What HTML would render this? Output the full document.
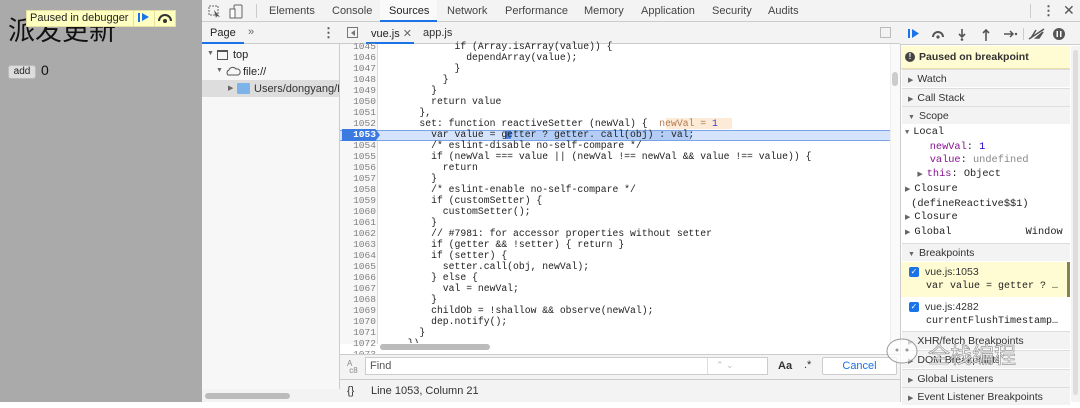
<!DOCTYPE html>
<html><head><meta charset="utf-8"><style>
*{margin:0;padding:0;box-sizing:border-box}
body{width:1080px;height:402px;overflow:hidden;position:relative;font-family:"Liberation Sans",sans-serif;font-size:11px;color:#333;background:#fff}
.a{position:absolute}
.mono{font-family:"Liberation Mono",monospace}
.code div{height:11px;line-height:11px;white-space:pre;font-size:9.75px}
.ln div{height:11px;line-height:11px;font-size:9.55px;text-align:right;color:#808080}
.sec{position:absolute;left:902px;width:168px;height:18px;line-height:18px;background:#f3f3f3;border-top:1px solid #ddd;color:#333;font-size:10.5px;padding-left:6px}
.tri{font-size:7px;color:#666;margin-right:4px}
</style></head><body>
<!-- page area -->
<div class="a" style="left:0;top:0;width:202px;height:402px;background:#aaa"></div>
<div class="a" style="left:8px;top:14px;font-size:27px;color:#111;font-family:'Liberation Sans','Noto Sans CJK SC',sans-serif;line-height:34px">派发更新</div>
<div class="a" style="left:26px;top:10px;width:150px;height:17px;background:#ffffc0;border:1px solid #e8e0a0"></div>
<div class="a" style="left:30px;top:12px;font-size:11px;color:#222">Paused in debugger</div>
<div class="a" style="left:133px;top:10px;width:1px;height:17px;background:#e8e0a0"></div>
<div class="a" style="left:154px;top:10px;width:1px;height:17px;background:#e8e0a0"></div>
<div class="a" style="left:138px;top:13px;width:2px;height:9px;background:#1a73e8"></div>
<div class="a" style="left:142px;top:13px;width:0;height:0;border-left:7px solid #1a73e8;border-top:4.5px solid transparent;border-bottom:4.5px solid transparent"></div>
<svg class="a" style="left:157px;top:12px" width="16" height="12"><path d="M2 9 A6 6 0 0 1 14 9" stroke="#333" stroke-width="2" fill="none"/><circle cx="8" cy="9" r="2" fill="#333"/></svg>
<div class="a" style="left:8px;top:65px;width:28px;height:14px;background:#ddd;border:1px solid #bbb;border-radius:3px;font-size:10px;text-align:center;line-height:12px;color:#222">add</div>
<div class="a" style="left:41px;top:62px;font-size:14px;color:#111">0</div>
<!-- top toolbar -->
<div class="a" style="left:202px;top:0;width:878px;height:22px;background:#f3f3f3;border-bottom:1px solid #ccc"></div>
<svg class="a" style="left:208px;top:4px" width="40" height="15"><rect x="1" y="2" width="9" height="9" fill="none" stroke="#666" stroke-dasharray="2 1"/><path d="M6 6 L12 13 L9 12 L8 14" fill="#555"/><rect x="26" y="1" width="8" height="13" rx="1" fill="none" stroke="#666"/><rect x="22" y="5" width="5" height="9" fill="#fff" stroke="#666"/></svg>
<div class="a" style="left:256px;top:4px;width:1px;height:14px;background:#ccc"></div>
<div class="a" style="top:5px;left:269px;color:#444">Elements</div>
<div class="a" style="top:5px;left:332px;color:#444">Console</div>
<div class="a" style="top:0;left:380px;width:57px;height:22px;background:#fafafa;border-bottom:2px solid #1a73e8"></div>
<div class="a" style="top:5px;left:389px;color:#222">Sources</div>
<div class="a" style="top:5px;left:447px;color:#444">Network</div>
<div class="a" style="top:5px;left:505px;color:#444">Performance</div>
<div class="a" style="top:5px;left:584px;color:#444">Memory</div>
<div class="a" style="top:5px;left:641px;color:#444">Application</div>
<div class="a" style="top:5px;left:712px;color:#444">Security</div>
<div class="a" style="top:5px;left:768px;color:#444">Audits</div>
<div class="a" style="left:1030px;top:4px;width:1px;height:14px;background:#ccc"></div>
<div class="a" style="left:1042px;top:3px;font-size:13px;color:#555;font-weight:bold">⋮</div>
<div class="a" style="left:1063px;top:2px;font-size:14px;color:#555">✕</div>
<!-- navigator -->
<div class="a" style="left:202px;top:22px;width:138px;height:380px;background:#f7f7f7;border-right:1px solid #ccc"></div>
<div class="a" style="left:202px;top:22px;width:138px;height:22px;background:#f3f3f3;border-bottom:1px solid #ccc"></div>
<div class="a" style="left:202px;top:42px;width:42px;height:2px;background:#1a73e8"></div>
<div class="a" style="left:210px;top:27px;color:#222">Page</div>
<div class="a" style="left:248px;top:26px;color:#666">»</div>
<div class="a" style="left:322px;top:25px;color:#555;font-weight:bold;font-size:13px">⋮</div>
<div class="a" style="left:207px;top:50px;font-size:7px;color:#666">▼</div>
<div class="a" style="left:217px;top:50px;width:11px;height:10px;border:1px solid #555;border-top-width:2px"></div>
<div class="a" style="left:233px;top:49px;color:#222">top</div>
<div class="a" style="left:216px;top:67px;font-size:7px;color:#666">▼</div>
<svg class="a" style="left:225px;top:65px" width="16" height="12"><path d="M3 10 A3 3 0 0 1 4 5 A4 4 0 0 1 11 4 A3 3 0 0 1 13 10 Z" fill="none" stroke="#555"/></svg>
<div class="a" style="left:243px;top:66px;color:#222">file://</div>
<div class="a" style="left:202px;top:80px;width:137px;height:17px;background:#ddd"></div>
<div class="a" style="left:228px;top:84px;font-size:7px;color:#666">▶</div>
<div class="a" style="left:237px;top:83px;width:13px;height:11px;background:#7cb3e8;border-radius:1px"></div>
<div class="a" style="left:254px;top:83px;color:#333;white-space:nowrap;width:85px;overflow:hidden">Users/dongyang/D</div>
<div class="a" style="left:202px;top:389px;width:138px;height:13px;background:#f3f3f3"></div>
<div class="a" style="left:205px;top:393px;width:85px;height:6px;background:#bbb;border-radius:3px"></div>
<!-- editor tabs -->
<div class="a" style="left:340px;top:22px;width:560px;height:22px;background:#f3f3f3;border-bottom:1px solid #ccc"></div>
<div class="a" style="left:347px;top:27px;width:11px;height:11px;border:1px solid #777"><div style="position:absolute;left:3px;top:2px;border-right:4px solid #777;border-top:3px solid transparent;border-bottom:3px solid transparent"></div></div>
<div class="a" style="left:371px;top:27px;color:#222">vue.js <span style="color:#666">✕</span></div>
<div class="a" style="left:366px;top:42px;width:48px;height:2px;background:#1a73e8"></div>
<div class="a" style="left:423px;top:27px;color:#333">app.js</div>
<div class="a" style="left:880px;top:27px;width:11px;height:11px;border:1px solid #bbb"></div>
<!-- code -->
<div class="a" style="left:340px;top:44px;width:38px;height:300px;background:#f7f7f7;border-right:1px solid #ddd"></div>
<div class="a" style="left:340px;top:130px;width:550px;height:11px;background:#d6e4fb;border-top:1px solid #7aa3e6;border-bottom:1px solid #7aa3e6"></div>
<div class="a" style="left:342px;top:129px;width:38px;height:12px;background:#3b7ae0;clip-path:polygon(0 0,88% 0,100% 50%,88% 100%,0 100%)"></div>
<div class="a" style="left:505px;top:131px;width:6px;height:8px;background:#4a86e8"></div>
<div class="a" style="left:511px;top:131px;width:180px;height:9px;background:#b3cdf6"></div>
<div class="a" style="left:666px;top:118px;width:66px;height:11px;background:#fdebd8"></div>
<div class="a ln mono" style="left:340px;top:41px;width:36px">
<div>1045</div><div>1046</div><div>1047</div><div>1048</div><div>1049</div><div>1050</div><div>1051</div><div>1052</div><div style="color:#fff;font-weight:bold">1053</div><div>1054</div><div>1055</div><div>1056</div><div>1057</div><div>1058</div><div>1059</div><div>1060</div><div>1061</div><div>1062</div><div>1063</div><div>1064</div><div>1065</div><div>1066</div><div>1067</div><div>1068</div><div>1069</div><div>1070</div><div>1071</div><div>1072</div><div>1073</div></div>
<div class="a code mono" style="left:396px;top:41px;color:#222">
<div>          if (Array.isArray(value)) {</div>
<div>            dependArray(value);</div>
<div>          }</div>
<div>        }</div>
<div>      }</div>
<div>      return value</div>
<div>    },</div>
<div>    set: function reactiveSetter (newVal) {  <span style="color:#b07a50">newVal = <span style="color:#3b3be0">1</span></span></div>
<div>      var value = getter ? getter. call(obj) : val;</div>
<div>      /* eslint-disable no-self-compare */</div>
<div>      if (newVal === value || (newVal !== newVal &amp;&amp; value !== value)) {</div>
<div>        return</div>
<div>      }</div>
<div>      /* eslint-enable no-self-compare */</div>
<div>      if (customSetter) {</div>
<div>        customSetter();</div>
<div>      }</div>
<div>      // #7981: for accessor properties without setter</div>
<div>      if (getter &amp;&amp; !setter) { return }</div>
<div>      if (setter) {</div>
<div>        setter.call(obj, newVal);</div>
<div>      } else {</div>
<div>        val = newVal;</div>
<div>      }</div>
<div>      childOb = !shallow &amp;&amp; observe(newVal);</div>
<div>      dep.notify();</div>
<div>    }</div>
<div>  })</div>
</div>
<div class="a" style="left:379px;top:343px;width:511px;height:9px;background:#fff"></div>
<div class="a" style="left:380px;top:344px;width:110px;height:6px;background:#bbb;border-radius:3px"></div>
<div class="a" style="left:890px;top:44px;width:10px;height:310px;background:#fafafa;border-left:1px solid #eee"></div>
<div class="a" style="left:892px;top:72px;width:6px;height:14px;background:#ccc;border-radius:3px"></div>
<!-- find bar -->
<div class="a" style="left:340px;top:354px;width:560px;height:48px;background:#f3f3f3;border-top:1px solid #ccc"></div>
<div class="a" style="left:347px;top:360px;font-size:8px;color:#888;line-height:7px">A<br>&nbsp;c8</div>
<div class="a" style="left:365px;top:357px;width:403px;height:18px;background:#fff;border:1px solid #ccc"></div>
<div class="a" style="left:370px;top:360px;color:#555">Find</div>
<div class="a" style="left:707px;top:358px;width:1px;height:16px;background:#ddd"></div>
<div class="a" style="left:716px;top:360px;color:#bbb;font-size:9px">⌃ ⌄</div>
<div class="a" style="left:778px;top:360px;color:#333;font-weight:bold">Aa</div>
<div class="a" style="left:804px;top:359px;color:#333">.*</div>
<div class="a" style="left:822px;top:357px;width:75px;height:18px;background:#fff;border:1px solid #ccc;border-radius:2px;text-align:center;line-height:16px;color:#1a73e8">Cancel</div>
<div class="a" style="left:340px;top:379px;width:560px;height:1px;background:#ccc"></div>
<div class="a" style="left:347px;top:385px;color:#333">{}</div>
<div class="a" style="left:371px;top:385px;color:#333">Line 1053, Column 21</div>
<!-- right panel -->
<div class="a" style="left:900px;top:22px;width:180px;height:380px;background:#fff;border-left:1px solid #ccc"></div>
<div class="a" style="left:900px;top:22px;width:180px;height:23px;background:#f3f3f3;border-bottom:1px solid #ccc"></div>
<svg class="a" style="left:905px;top:26px" width="175" height="16">
<rect x="3" y="3" width="2" height="9" fill="#1a73e8"/><path d="M7 3 L14 7.5 L7 12Z" fill="#1a73e8"/>
<path d="M28 11 A5 5 0 0 1 38 11" stroke="#555" stroke-width="2" fill="none"/><circle cx="33" cy="11" r="1.6" fill="#555"/>
<path d="M57 3 V11 M54 8 L57 11 L60 8" stroke="#555" stroke-width="1.6" fill="none"/><circle cx="57" cy="13.5" r="1.3" fill="#555"/>
<path d="M81 13 V4 M78 7 L81 4 L84 7" stroke="#555" stroke-width="1.6" fill="none"/><circle cx="81" cy="14" r="1" fill="#555"/>
<path d="M99 8 H108 M105 5 L108 8 L105 11" stroke="#555" stroke-width="1.5" fill="none"/><circle cx="111" cy="8" r="1.2" fill="#555"/>
<rect x="118" y="2" width="1" height="12" fill="#ccc"/>
<path d="M126 12 L131 4 M131 12 L138 6 L134 12Z M124 13 L139 3" stroke="#555" stroke-width="1.5" fill="#555"/>
<circle cx="154" cy="8" r="6" fill="#555"/><rect x="151.5" y="5" width="1.5" height="6" fill="#fff"/><rect x="155" y="5" width="1.5" height="6" fill="#fff"/>
</svg>
<div class="a" style="left:901px;top:46px;width:169px;height:23px;background:#fffbd2;border-bottom:1px solid #e8e0a8"></div>
<div class="a" style="left:905px;top:52px;width:10px;height:10px;border-radius:50%;background:#444;color:#fff;font-size:8px;text-align:center;line-height:10px;font-weight:bold">!</div>
<div class="a" style="left:919px;top:51px;color:#333;font-size:10.5px;font-weight:bold">Paused on breakpoint</div>
<div class="sec" style="top:69px"><span class="tri">▶</span>Watch</div>
<div class="sec" style="top:88px"><span class="tri">▶</span>Call Stack</div>
<div class="sec" style="top:106px"><span class="tri">▼</span>Scope</div>
<div class="a mono" style="left:905px;top:126px;font-size:10.3px;line-height:13.7px;color:#222;white-space:pre"><span class="tri">▼</span>Local
    <span style="color:#881391">newVal</span>: <span style="color:#1c00cf">1</span>
    <span style="color:#881391">value</span>: <span style="color:#888">undefined</span>
  <span class="tri">▶</span><span style="color:#881391">this</span>: Object
<span class="tri">▶</span>Closure
 (defineReactive$$1)
<span class="tri">▶</span>Closure
<span class="tri">▶</span>Global            Window</div>
<div class="sec" style="top:243px"><span class="tri">▼</span>Breakpoints</div>
<div class="a" style="left:901px;top:262px;width:169px;height:35px;background:#fffbd2;border-right:3px solid #888050"></div>
<div class="a" style="left:909px;top:267px;width:10px;height:10px;background:#1a73e8;border-radius:2px;color:#fff;font-size:8px;line-height:10px;text-align:center">✓</div>
<div class="a" style="left:925px;top:266px;color:#333;font-size:10.5px">vue.js:1053</div>
<div class="a mono" style="left:926px;top:281px;font-size:10px;color:#222;white-space:pre">var value = getter ? …</div>
<div class="a" style="left:909px;top:302px;width:10px;height:10px;background:#1a73e8;border-radius:2px;color:#fff;font-size:8px;line-height:10px;text-align:center">✓</div>
<div class="a" style="left:925px;top:301px;color:#333;font-size:10.5px">vue.js:4282</div>
<div class="a mono" style="left:926px;top:316px;font-size:10px;color:#222;white-space:pre">currentFlushTimestamp…</div>
<div class="sec" style="top:331px"><span class="tri">▶</span>XHR/fetch Breakpoints</div>
<div class="sec" style="top:350px"><span class="tri">▶</span>DOM Breakpoints</div>
<div class="sec" style="top:369px"><span class="tri">▶</span>Global Listeners</div>
<div class="sec" style="top:387px"><span class="tri">▶</span>Event Listener Breakpoints</div>
<div class="a" style="left:1071px;top:46px;width:9px;height:356px;background:#f3f3f3"></div>
<div class="a" style="left:1073px;top:50px;width:5px;height:345px;background:#ddd;border-radius:3px"></div>
<!-- watermark -->
<svg class="a" style="left:880px;top:335px" width="40" height="35"><ellipse cx="22" cy="16" rx="15" ry="12" fill="rgba(255,255,255,0.7)" stroke="#999"/><circle cx="17" cy="15" r="1.5" fill="#999"/><circle cx="27" cy="15" r="1.5" fill="#999"/></svg>
<div class="a" style="left:928px;top:338px;font-size:22px;color:rgba(255,255,255,0.85);font-family:'Liberation Sans','Noto Sans CJK SC',sans-serif;-webkit-text-stroke:0.6px #888">全栈编程</div>
</body></html>
